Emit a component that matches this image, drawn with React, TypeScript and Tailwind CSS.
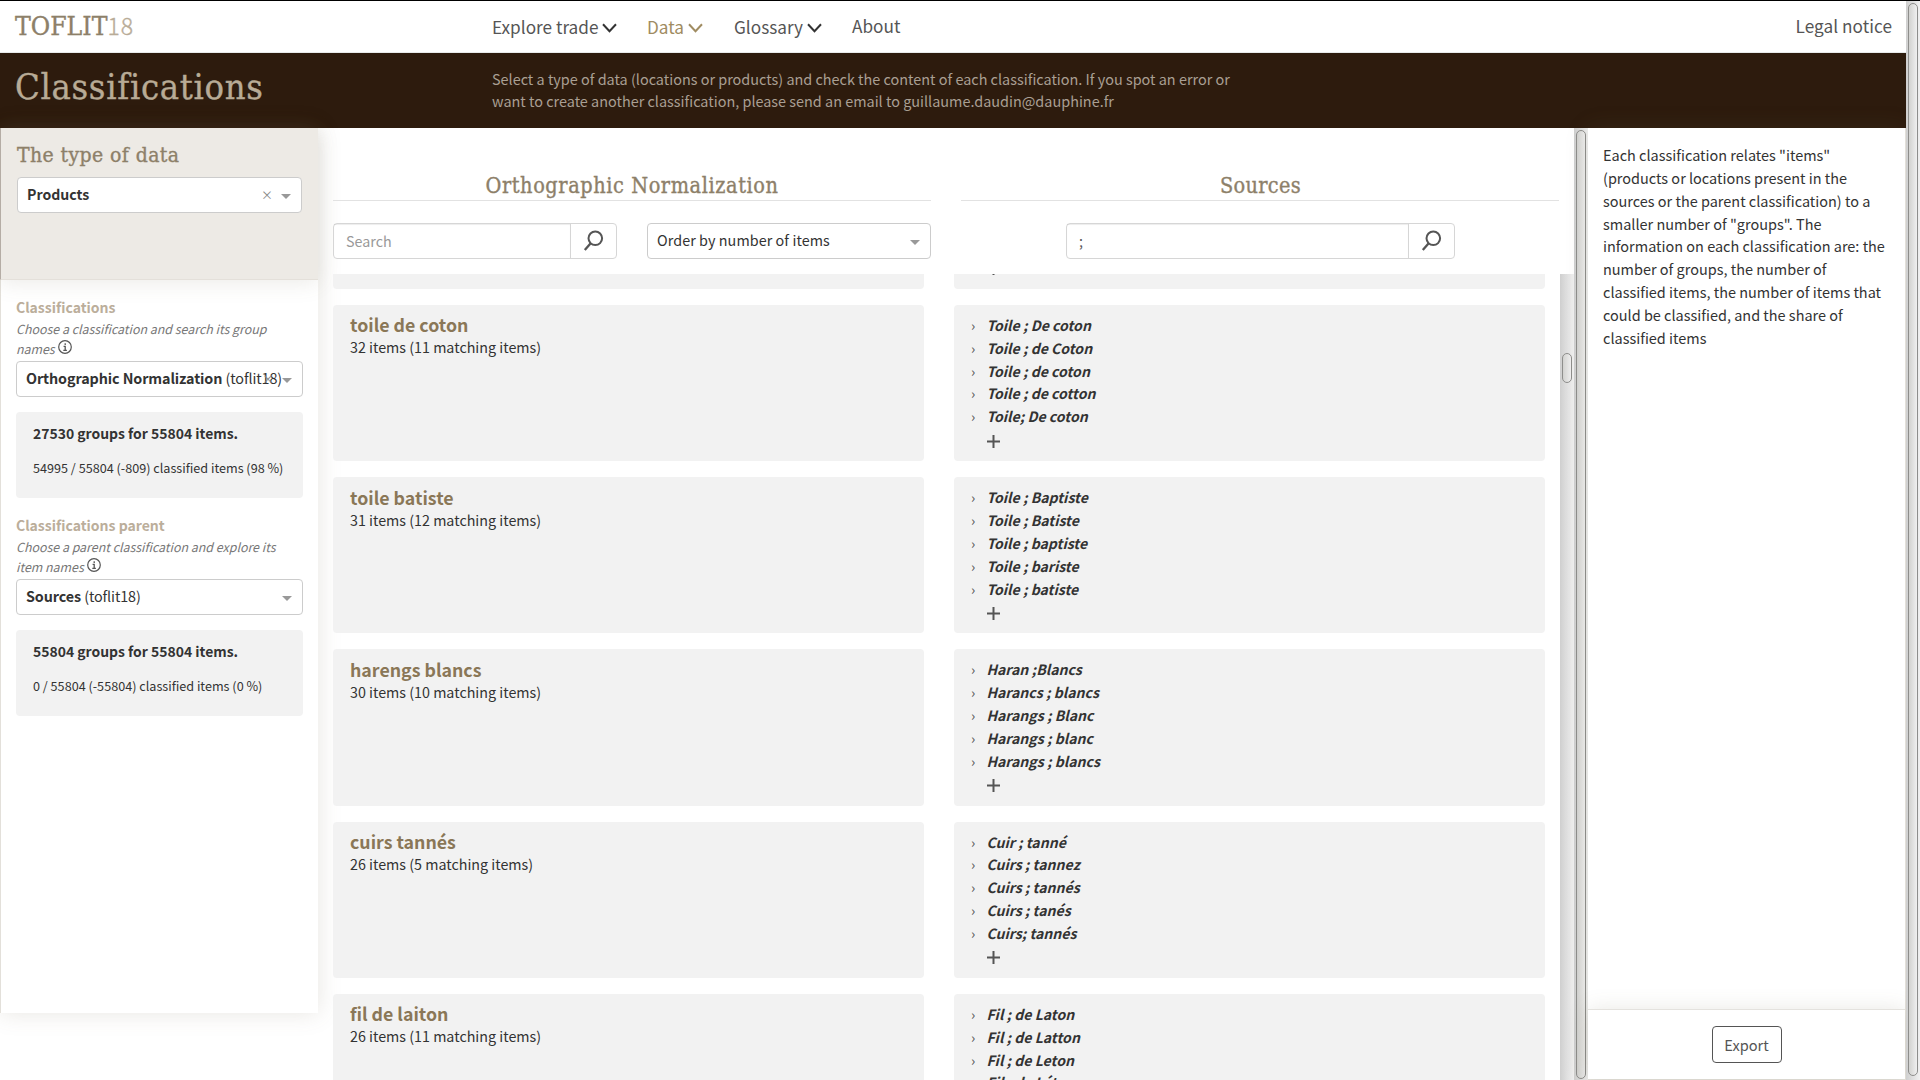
import type { ReactNode } from "react";

const groups = [
  { name: "toile d'étoupe", count: "33 items (9 matching items)", items: ["Toile ; d'Etoupe", "Toile ; d'Etoupes", "Toile ; d'étoupe", "Toile ; d'étoupes", "Toile; d'étoupes"] },
  { name: "toile de coton", count: "32 items (11 matching items)", items: ["Toile ; De coton", "Toile ; de Coton", "Toile ; de coton", "Toile ; de cotton", "Toile; De coton"] },
  { name: "toile batiste", count: "31 items (12 matching items)", items: ["Toile ; Baptiste", "Toile ; Batiste", "Toile ; baptiste", "Toile ; bariste", "Toile ; batiste"] },
  { name: "harengs blancs", count: "30 items (10 matching items)", items: ["Haran ;Blancs", "Harancs ; blancs", "Harangs ; Blanc", "Harangs ; blanc", "Harangs ; blancs"] },
  { name: "cuirs tannés", count: "26 items (5 matching items)", items: ["Cuir ; tanné", "Cuirs ; tannez", "Cuirs ; tannés", "Cuirs ; tanés", "Cuirs; tannés"] },
  { name: "fil de laiton", count: "26 items (11 matching items)", items: ["Fil ; de Laton", "Fil ; de Latton", "Fil ; de Leton", "Fil ; de Léton", "Fil ; de laiton"] },
];

const serif = "font-['DejaVu_Serif_Condensed','DejaVu_Serif',serif] [-webkit-text-stroke:0.35px_currentColor]";

function Chevron() {
  return (
    <svg width="15" height="10" viewBox="0 0 15 10" fill="none" stroke="currentColor" strokeWidth="2" className="mt-[3px] ml-[4px]">
      <path d="M1 1.2 7.5 8.2 14 1.2" />
    </svg>
  );
}

function Caret() {
  return <span className="block h-0 w-0 border-x-[5px] border-t-[5px] border-x-transparent border-t-[#999]" />;
}

function SearchIcon() {
  return (
    <svg width="22" height="22" viewBox="0 0 22 22" fill="none" stroke="#555" strokeWidth="2">
      <circle cx="12.3" cy="8.3" r="6.8" />
      <path d="M7.7 13.2 1.8 20" strokeWidth="2.3" />
    </svg>
  );
}

function InfoIcon() {
  return (
    <svg width="14" height="14" viewBox="0 0 14 14" fill="none" stroke="#555" className="ml-[3px] inline-block align-[0.5px]">
      <circle cx="7" cy="7" r="6.3" strokeWidth="1.2" />
      <path d="M7.2 3.3v1.6M5.6 6.4h1.6v3.8M5.3 10.3h3.6" strokeWidth="1.3" />
    </svg>
  );
}

function PlusIcon() {
  return (
    <svg width="13" height="13" viewBox="0 0 13 13" stroke="#555" strokeWidth="2">
      <path d="M6.5 0v13M0 6.5h13" />
    </svg>
  );
}

function Select({ children, clear }: { children: ReactNode; clear?: boolean }) {
  return (
    <div className="relative flex h-[36px] items-center rounded-[4px] border border-[#ccc] bg-white pl-[9px] text-[14.35px] leading-[33px] text-[#333]">
      <span className="-mt-[2.4px] whitespace-nowrap">{children}</span>
      {clear && <span className="absolute top-0 right-[28px] text-[12px] leading-[33px] text-[#888]">×</span>}
      <span className="absolute top-[16px] right-[10px]"><Caret /></span>
    </div>
  );
}

function SearchBox({ children }: { children: ReactNode }) {
  return (
    <div className="flex h-[36px] rounded-[4px] border border-[#d6d6d6] bg-white">
      <div className="flex-1 pl-[12px] text-[14.3px] leading-[34px] shadow-[inset_0_1px_1px_rgba(0,0,0,0.075)]">{children}</div>
      <div className="flex w-[46px] items-center justify-center border-l border-[#d6d6d6] pb-px"><SearchIcon /></div>
    </div>
  );
}

function Stats({ title, detail }: { title: string; detail: string }) {
  return (
    <div className="mt-[15px] h-[86px] rounded-[4px] bg-[#f2f2f2] pt-[10px] pl-[17px] text-[#333]">
      <div className="text-[13.95px] leading-[23px] font-bold">{title}</div>
      <div className="mt-[13px] text-[12.63px] leading-[20px]">{detail}</div>
    </div>
  );
}

function Filter({ title, help, helpEnd, children }: { title: string; help: string; helpEnd: string; children: ReactNode }) {
  return (
    <div className="h-[218px]">
      <h3 className="text-[14px] leading-[23px] font-bold text-[#bbae9b]">{title}</h3>
      <div className="mb-[2px] text-[12.4px] leading-[20px] whitespace-nowrap text-[#777]">
        <div className="italic">{help}</div>
        <div className="h-[20px]"><em>{helpEnd}</em><InfoIcon /></div>
      </div>
      {children}
    </div>
  );
}

const track = "shrink-0 bg-linear-to-r from-[#cfcfcf] to-[#f1f1f1]";
const thumb = "rounded-[6px] border border-[#8e8e8c] bg-linear-to-r from-[#d2d2d0] to-[#f0f0f0]";

export default function App() {
  return (
    <div className="flex h-[1080px] w-[1920px] overflow-hidden border-t border-black bg-white font-['Noto_Sans_CJK_SC',sans-serif] text-[#333]">
      <div className="flex w-[1906px] flex-col">
        <nav className="flex h-[52px] shrink-0 border-b border-[#e7eaea] pr-[14px] pl-[15px] text-[17.2px] leading-[51px] whitespace-nowrap text-[#555]">
          <div className={`${serif} w-[477px] text-[26.3px] leading-[50px] text-[#8d8069]`}>
            TOFLIT<span className="font-['Noto_Sans_CJK_SC',sans-serif] text-[23px] leading-[40px] tracking-[0.9px] font-light text-[#b9ac98]">18</span>
          </div>
          <div className="flex w-[155px] items-center">Explore trade<span className="text-[#333]"><Chevron /></span></div>
          <div className="flex w-[87px] items-center text-[#a08c62]">Data<Chevron /></div>
          <div className="flex w-[118px] items-center">Glossary<span className="text-[#333]"><Chevron /></span></div>
          <div className="-mt-px">About</div>
          <div className="-mt-px ml-auto tracking-[0.05px]">Legal notice</div>
        </nav>

        <header className="flex h-[75px] shrink-0 bg-[#2d1b0d] pl-[15px]">
          <h1 className={`${serif} w-[477px] text-[36px] leading-[68px] tracking-[0.7px] text-[#b8ab96] [font-variant-ligatures:none]`}>Classifications</h1>
          <p className="pt-[15px] text-[14.43px] leading-[22px] whitespace-nowrap text-[#a99f93]">
            Select a type of data (locations or products) and check the content of each classification. If you spot an error or<br />
            want to create another classification, please send an email to guillaume.daudin@dauphine.fr
          </p>
        </header>

        <div className="flex min-h-0 flex-1">
          <aside className="h-[885px] w-[318px] shrink-0 border-l border-[#e3e0da] bg-white shadow-[0_0_22px_rgba(110,100,75,0.17)]">
            <div className="-ml-px h-[152px] border-b border-l border-b-[#e4e0da] border-l-[#b5ada5] bg-[#edeae5] px-[16px] pt-[14px] shadow-[0_3px_20px_rgba(110,100,75,0.13)]">
              <h2 className={`${serif} mb-[8px] text-[21px] leading-[27px] tracking-[0.4px] text-[#8d8069]`}>The type of data</h2>
              <Select clear><b className="text-[14.1px]">Products</b></Select>
            </div>
            <div className="px-[15px] pt-[16px]">
              <Filter title="Classifications" help="Choose a classification and search its group" helpEnd="names">
                <Select clear><span className="tracking-[-0.1px]"><b>Orthographic Normalization</b> (toflit18)</span></Select>
                <Stats title="27530 groups for 55804 items." detail="54995 / 55804 (-809) classified items (98 %)" />
              </Filter>
              <Filter title="Classifications parent" help="Choose a parent classification and explore its" helpEnd="item names">
                <Select><span className="tracking-[-0.1px]"><b>Sources</b> (toflit18)</span></Select>
                <Stats title="55804 groups for 55804 items." detail="0 / 55804 (-55804) classified items (0 %)" />
              </Filter>
            </div>
          </aside>

          <main className="flex min-w-0 flex-1 flex-col pl-[15px]">
            <div className="flex h-[146px] shrink-0 gap-[30px]">
              <section className="w-[598px]">
                <h2 className={`${serif} h-[73px] border-b border-[#e2e2e2] pt-[44px] text-center text-[21.5px] leading-[28px] tracking-[0.58px] text-[#8d8069]`}>Orthographic Normalization</h2>
                <div className="mt-[22px] flex gap-[30px]">
                  <div className="w-[284px]"><SearchBox><span className="text-[#999]">Search</span></SearchBox></div>
                  <div className="w-[284px]"><Select><span className="tracking-[0.07px]">Order by number of items</span></Select></div>
                </div>
              </section>
              <section className="w-[598px]">
                <h2 className={`${serif} h-[73px] border-b border-[#e2e2e2] pt-[44px] pl-px text-center text-[21.5px] leading-[28px] tracking-[0.3px] text-[#8d8069]`}>Sources</h2>
                <div className="mt-[22px] ml-[105px] w-[389px]"><SearchBox><span className="text-[#555]">;</span></SearchBox></div>
              </section>
            </div>
            <div className="flex min-h-0 flex-1">
              <div className="min-w-0 flex-1 overflow-hidden">
                <div className="-mt-[141.4px] flex flex-col gap-[16px]">
                  {groups.map((g) => (
                    <div key={g.name} className="flex h-[156.25px] gap-[30px]">
                      <div className="w-[591px] rounded-[4px] bg-[#f2f2f2] pt-[8.5px] pl-[17px]">
                        <h4 className="text-[17.75px] leading-[22px] font-bold text-[#8a7757]">{g.name}</h4>
                        <p className="text-[14.3px] leading-[23px]">{g.count}</p>
                      </div>
                      <div className="w-[591px] rounded-[4px] bg-[#f2f2f2] pt-[9px] pl-[17px]">
                        <ul className="text-[14.07px] leading-[22.86px]">
                          {g.items.map((it) => (
                            <li key={it} className="flex">
                              <span className="w-[15.4px] text-[#555]">›</span>
                              <b className="italic">{it}</b>
                            </li>
                          ))}
                        </ul>
                        <div className="pt-[6.5px] pl-[16.4px]"><PlusIcon /></div>
                      </div>
                    </div>
                  ))}
                </div>
              </div>
              <div className={`${track} w-[14px] px-[2px] pt-[79px]`}><div className={`${thumb} h-[30px] w-[10px]`} /></div>
            </div>
          </main>

          <div className={`${track} w-[14px] px-[2px] pt-[2px]`}><div className={`${thumb} h-[949px] w-[10px]`} /></div>

          <aside className="flex w-[318px] shrink-0 flex-col border-r border-b border-[#e3e0da] bg-white shadow-[0_0_22px_rgba(110,100,75,0.15)]">
            <p className="flex-1 pt-[16px] pl-[15px] text-[14.47px] leading-[22.86px] whitespace-nowrap">
              Each classification relates "items"<br />
              (products or locations present in the<br />
              sources or the parent classification) to a<br />
              smaller number of "groups". The<br />
              information on each classification are: the<br />
              number of groups, the number of<br />
              classified items, the number of items that<br />
              could be classified, and the share of<br />
              classified items
            </p>
            <div className="flex h-[70px] justify-center border-t border-[#e4e2de] pt-[16px] shadow-[0_0_20px_rgba(110,100,75,0.15)]">
              <button className="h-[37px] w-[70px] rounded-[4px] border border-[#555] bg-white text-[14.6px] leading-[35px] text-[#555]">Export</button>
            </div>
          </aside>
        </div>
      </div>
      <div className={`${track} w-[14px] px-[2px] pt-[2px]`}><div className={`${thumb} h-[1073px] w-[10px]`} /></div>
    </div>
  );
}
